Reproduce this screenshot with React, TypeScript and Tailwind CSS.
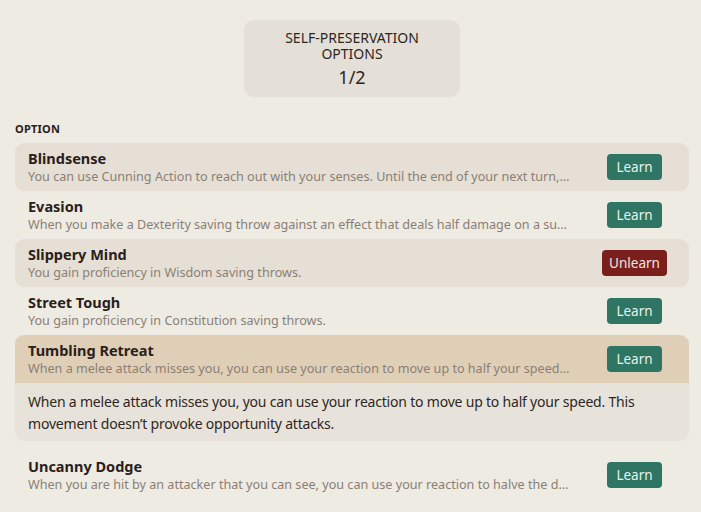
import { FC, useState } from "react";

type Option = {
  name: string;
  summary: string;
  detail?: string;
  learned?: boolean;
};

const options: Option[] = [
  {
    name: "Blindsense",
    summary:
      "You can use Cunning Action to reach out with your senses. Until the end of your next turn, you know the location of any hidden or invisible creature.",
  },
  {
    name: "Evasion",
    summary:
      "When you make a Dexterity saving throw against an effect that deals half damage on a successful save, you take no damage.",
  },
  {
    name: "Slippery Mind",
    summary: "You gain proficiency in Wisdom saving throws.",
    learned: true,
  },
  {
    name: "Street Tough",
    summary: "You gain proficiency in Constitution saving throws.",
  },
  {
    name: "Tumbling Retreat",
    summary:
      "When a melee attack misses you, you can use your reaction to move up to half your speed. This movement doesn’t provoke opportunity attacks.",
    detail:
      "When a melee attack misses you, you can use your reaction to move up to half your speed. This movement doesn’t provoke opportunity attacks.",
  },
  {
    name: "Uncanny Dodge",
    summary:
      "When you are hit by an attacker that you can see, you can use your reaction to halve the damage against you.",
  },
];

const OptionRow: FC<{ option: Option; index: number; open: boolean }> = ({
  option,
  index,
  open,
}) => {
  const striped = index % 2 === 0;
  return (
    <div
      className={
        open
          ? "mb-[10px] overflow-hidden rounded-[9px] bg-[#e8e3da]"
          : striped
            ? "rounded-[9px] bg-[#e5dfd5]"
            : "rounded-[9px]"
      }
    >
      <div
        className={
          open
            ? "flex h-[48px] items-center bg-[#e0cfb7] pl-[13px] pr-[14px]"
            : "flex h-[48px] items-center pl-[13px] pr-[14px]"
        }
      >
        <div className="w-[543px] min-w-0">
          <p className="text-[14.5px] font-bold leading-[19px] text-[#2a201b]">
            {option.name}
          </p>
          <p className="truncate text-[12.6px] leading-[17px] text-[#8a7f76]">
            {option.summary}
          </p>
        </div>
        <div className="flex flex-1 justify-center pl-[23px]">
          {option.learned ? (
            <button className="h-[26px] rounded-[4px] bg-[#7b1f1c] px-[7px] text-[13.5px] leading-[26px] text-[#f3e6e0]">
              Unlearn
            </button>
          ) : (
            <button className="h-[26px] rounded-[4px] bg-[#2e7563] px-[9px] text-[13.5px] leading-[26px] text-[#eaf3ef]">
              Learn
            </button>
          )}
        </div>
      </div>
      {open && option.detail && (
        <p className="px-[13px] pb-[6px] pt-[8px] text-[14px] leading-[22px] tracking-[-0.2px] text-[#2f2723]">
          {option.detail}
        </p>
      )}
    </div>
  );
};

const App: FC = () => {
  const [openIndex] = useState(4);

  return (
    <div
      className="min-h-[512px] w-[701px] bg-[#eeebe3] pb-[14px] pt-[20px]"
      style={{ fontFamily: '"Noto Sans", "Open Sans", sans-serif' }}
    >
      <div className="ml-[244px] flex h-[77px] w-[216px] flex-col items-center justify-center rounded-[10px] bg-[#e5e0d7] text-[#2c2622]">
        <p className="text-[14px] leading-[16px]">SELF-PRESERVATION</p>
        <p className="text-[14px] leading-[16px]">OPTIONS</p>
        <p className="mt-[5px] text-[18px] leading-[20px]">1/2</p>
      </div>

      <p className="ml-[15px] mt-[24px] text-[11px] font-bold tracking-[0.02em] text-[#2a201b]">
        OPTION
      </p>

      <div className="ml-[15px] mr-[12px] mt-[5px] flex flex-col">
        {options.map((option, i) => (
          <OptionRow
            key={option.name}
            option={option}
            index={i}
            open={i === openIndex}
          />
        ))}
      </div>
    </div>
  );
};

export default App;
